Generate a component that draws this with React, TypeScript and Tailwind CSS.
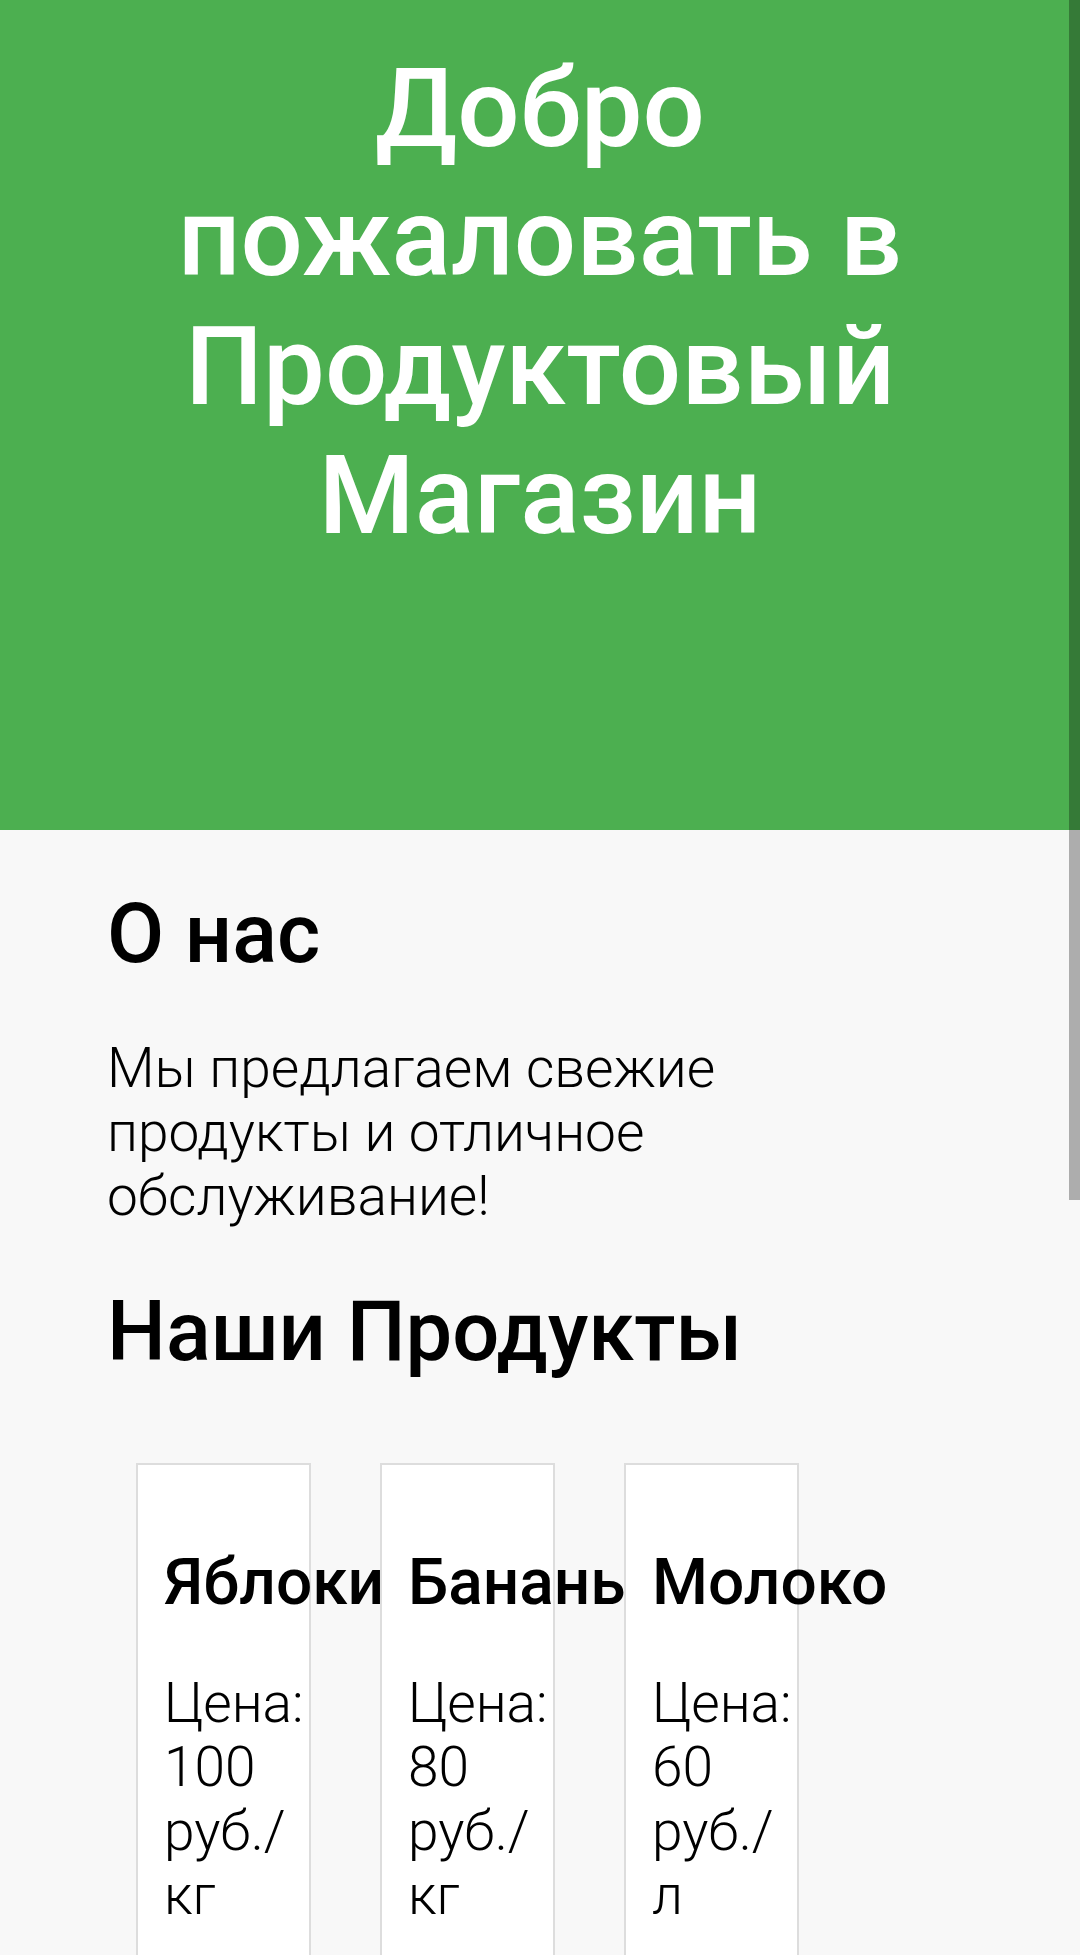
import React from 'react';

const products = [
  { name: 'Яблоки', price: 'Цена: 100 руб./кг' },
  { name: 'Бананы', price: 'Цена: 80 руб./кг' },
  { name: 'Молоко', price: 'Цена: 60 руб./л' },
];

export default function App() {
  return (
    <div className="min-h-screen bg-[#f8f8f8] text-black" style={{ fontFamily: 'Roboto, "Noto Sans", sans-serif' }}>
      {/* Шапка */}
      <header className="h-[830px] bg-[#4caf50] px-[52px] pt-[44px] text-center">
        <h1 className="mx-auto max-w-[900px] text-[110px] font-medium leading-[129px] text-white">
          Добро пожаловать в Продуктовый Магазин
        </h1>
      </header>

      <main className="px-[107px]">
        {/* О нас */}
        <section>
          <h2 className="pt-[55px] text-[83px] font-medium leading-[97px]">О нас</h2>
          <p className="mt-[54px] max-w-[640px] text-[55px] font-light leading-[64px]">
            Мы предлагаем свежие продукты и отличное обслуживание!
          </p>
        </section>

        {/* Продукты */}
        <section>
          <h2 className="mt-[55px] text-[83px] font-medium leading-[97px]">Наши Продукты</h2>
          <div className="ml-[29px] mt-[83px] flex gap-[69px]">
            {products.map((p) => (
              <div key={p.name} className="w-[175px] shrink-0 border-2 border-[#dddddd] bg-white px-[26px] pt-[26px] pb-[80px]">
                <h3 className="mt-[54px] whitespace-nowrap text-[64px] font-medium leading-[75px]">{p.name}</h3>
                <p className="mt-[51px] text-[55px] font-light leading-[64px]">{p.price}</p>
              </div>
            ))}
          </div>
        </section>
      </main>

      {/* полоса прокрутки поверх страницы */}
      <div className="fixed right-0 top-0 h-[1200px] w-[11px] bg-black/30" />
    </div>
  );
}
